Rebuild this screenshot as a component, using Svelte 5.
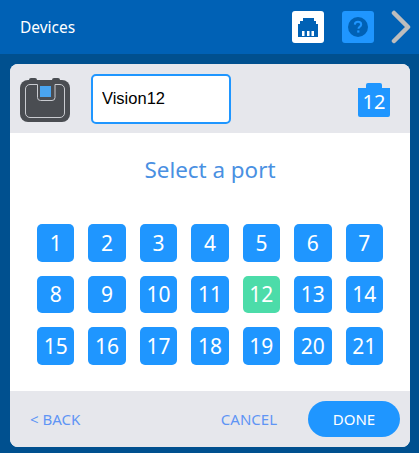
<script>
  const ports = Array.from({ length: 21 }, (_, i) => i + 1);
  const selected = 12;
  let name = 'Vision12';
</script>

<div class="page">
  <header class="topbar">
    <span class="title">Devices</span>
    <div class="actions">
      <button class="icon-btn white" aria-label="Ports">
        <svg width="20" height="19" viewBox="0 0 20 19">
          <path fill="#0061b5" d="M5 0h11v3h2v3h2v13H0V6h2V3h3z" />
          <rect x="4" y="13" width="2.500" height="5" fill="#fff" />
          <rect x="9" y="13" width="2.500" height="5" fill="#fff" />
          <rect x="13.500" y="13" width="2.500" height="5" fill="#fff" />
        </svg>
      </button>
      <button class="icon-btn blue" aria-label="Help">
        <svg width="20" height="20" viewBox="0 0 20 20">
          <circle cx="10" cy="10" r="10" fill="#0061b5" />
          <path d="M6.800 7.600C6.900 5.700 8.200 4.800 10 4.800c1.900 0 3.200 1 3.200 2.600 0 1.300-.8 1.900-1.600 2.500-.8.500-1.100.9-1.100 1.800" fill="none" stroke="#1f96ff" stroke-width="2" />
          <rect x="9.200" y="13.400" width="2.200" height="2.200" fill="#1f96ff" />
        </svg>
      </button>
      <svg class="chevron" width="20" height="34" viewBox="0 0 20 34">
        <path d="M3 3l14 14L3 31" fill="none" stroke="#bdbdbd" stroke-width="4.500" stroke-linecap="round" stroke-linejoin="round" />
      </svg>
    </div>
  </header>

  <main class="card">
    <section class="card-head">
      <svg class="device" width="50" height="44" viewBox="0 0 50 44">
        <rect x="9" y="0" width="8" height="6" rx="2" fill="#4a4d52" />
        <rect x="32" y="0" width="8" height="6" rx="2" fill="#4a4d52" />
        <rect x="0" y="2" width="50" height="42" rx="8" fill="#4a4d52" />
        <path d="M17.500 6.500H10a4.500 4.500 0 0 0-4.500 4.500v24a4.500 4.500 0 0 0 4.500 4.500h30a4.500 4.500 0 0 0 4.500-4.500V11A4.500 4.500 0 0 0 40 6.500h-5v13a3 3 0 0 1-3 3H20.500a3 3 0 0 1-3-3z" fill="none" stroke="#c9cbd0" stroke-width="1" />
        <rect x="20" y="8" width="11" height="11" fill="#4aa5f0" />
      </svg>
      <input class="name" bind:value={name} aria-label="Device name" />
      <div class="port-badge">
        <span class="tab"></span>
        <span class="badge-body">12</span>
      </div>
    </section>

    <section class="card-body">
      <h2>Select a port</h2>
      <div class="grid">
        {#each ports as port}
          <button class="port" class:active={port === selected}>{port}</button>
        {/each}
      </div>
    </section>

    <footer class="card-foot">
      <button class="link back">&lt; BACK</button>
      <button class="link cancel">CANCEL</button>
      <button class="done">DONE</button>
    </footer>
  </main>
</div>

<style>
  :global(body) {
    margin: 0;
    background: #00508f;
  }

  button {
    border: none;
    padding: 0;
    background: none;
    font-family: "Noto Sans", sans-serif;
  }

  .page {
    width: 419px;
    height: 453px;
    overflow: hidden;
    background: #00508f;
    font-family: "Noto Sans", sans-serif;
  }

  .topbar {
    height: 54px;
    display: flex;
    align-items: center;
    justify-content: space-between;
    padding: 0 8px 0 20px;
    background: #0061b5;
    box-sizing: border-box;
  }

  .title {
    color: #fff;
    font-size: 15.500px;
  }

  .actions {
    display: flex;
    align-items: center;
  }

  .icon-btn {
    width: 32px;
    height: 32px;
    border-radius: 3px;
    display: flex;
    align-items: center;
    justify-content: center;
    margin-right: 18px;
  }

  .icon-btn.white {
    background: #fff;
  }

  .icon-btn.blue {
    background: #1f96ff;
    margin-right: 17px;
  }

  .chevron {
    display: block;
  }

  .card {
    margin: 10px 9px 0 10px;
    height: 383px;
    border-radius: 8px;
    overflow: hidden;
    background: #fff;
    display: flex;
    flex-direction: column;
  }

  .card-head {
    height: 69px;
    flex: none;
    display: flex;
    align-items: center;
    background: #e6e7ec;
    padding: 0 20px 0 10px;
    box-sizing: border-box;
  }

  .device {
    flex: none;
    margin-top: 3px;
  }

  .name {
    width: 140px;
    height: 50px;
    margin-left: 21px;
    padding: 0 9px;
    box-sizing: border-box;
    border: 2px solid #1f96ff;
    border-radius: 5px;
    background: #fff;
    color: #000;
    font-family: "Liberation Sans", sans-serif;
    font-size: 16.500px;
    outline: none;
  }

  .port-badge {
    margin-left: auto;
    width: 32px;
    display: flex;
    flex-direction: column;
    align-items: center;
    margin-top: 3px;
  }

  .tab {
    width: 16px;
    height: 5px;
    border-radius: 2px 2px 0 0;
    background: #1f96ff;
  }

  .badge-body {
    width: 32px;
    height: 29px;
    border-radius: 0 0 2px 2px;
    background: #1f96ff;
    color: #fff;
    font-size: 20px;
    line-height: 27px;
    text-align: center;
  }

  .card-body {
    flex: 1;
    display: flex;
    flex-direction: column;
    align-items: center;
  }

  h2 {
    margin: 22px 0 0;
    height: 30px;
    color: #4a90e2;
    font-size: 22.400px;
    font-weight: 400;
    line-height: 30px;
  }

  .grid {
    margin-top: 39px;
    width: 346px;
    display: grid;
    grid-template-columns: repeat(7, 37.4px);
    justify-content: space-between;
    grid-auto-rows: 37.500px;
    row-gap: 14px;
  }

  .port {
    border-radius: 5px;
    background: #1f96ff;
    color: #fff;
    font-size: 21px;
  }

  .port.active {
    background: #4cdca9;
  }

  .card-foot {
    height: 56px;
    flex: none;
    display: flex;
    align-items: center;
    background: #e6e7ec;
    padding: 0 10px 0 20px;
    box-sizing: border-box;
  }

  .link {
    color: #5f95f5;
    font-size: 15px;
  }

  .cancel {
    margin-left: auto;
    margin-right: 31px;
  }

  .done {
    width: 92px;
    height: 36px;
    border-radius: 18px;
    background: #1f96ff;
    color: #fff;
    font-size: 15px;
  }
</style>
